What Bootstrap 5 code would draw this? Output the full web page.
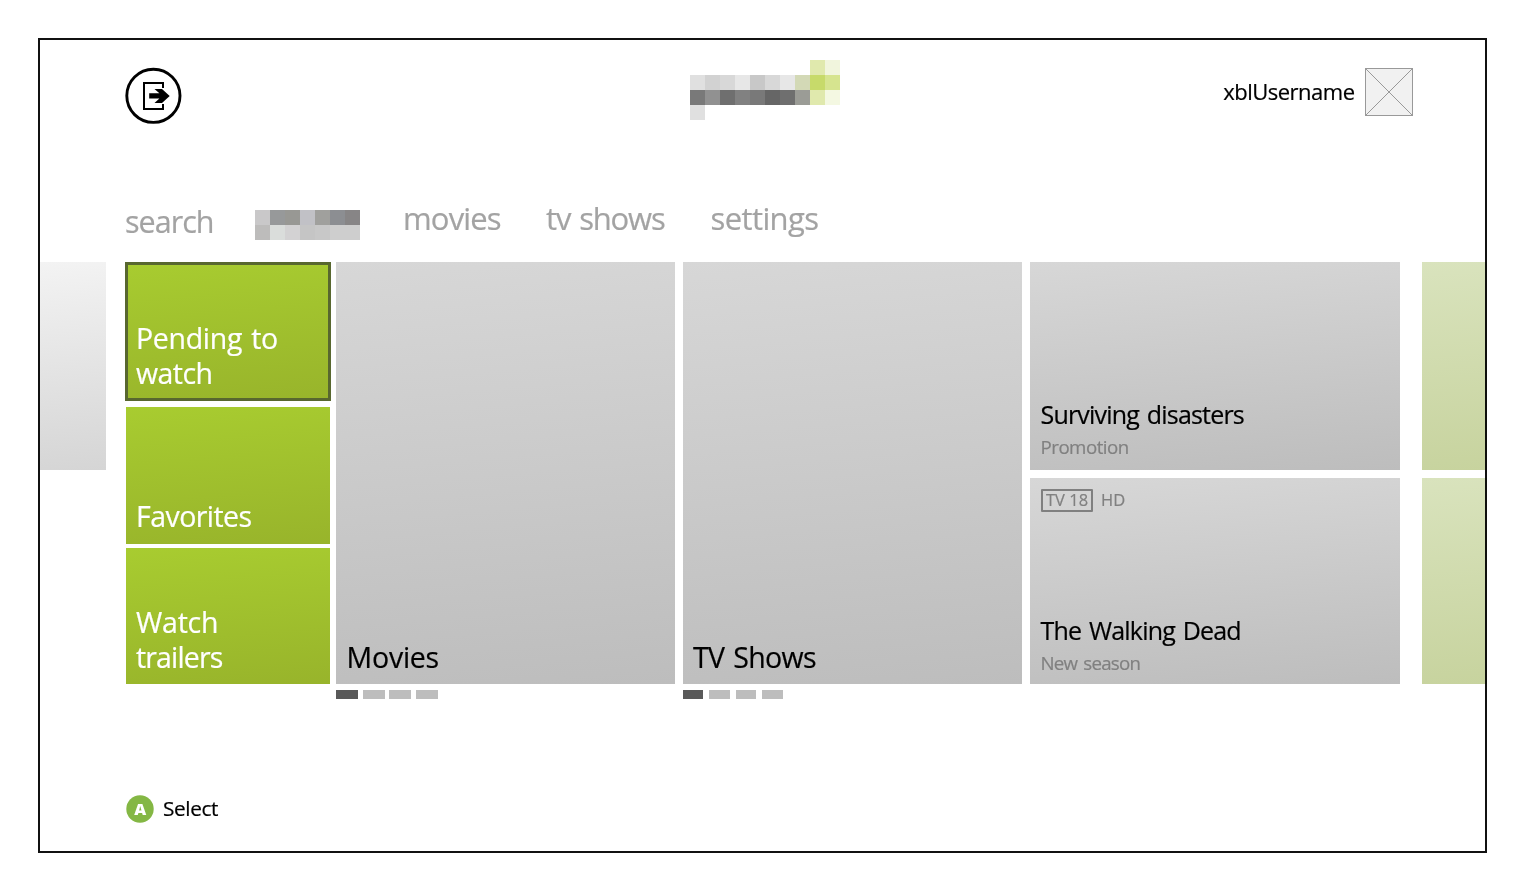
<!DOCTYPE html>
<html lang="en">
<head>
<meta charset="utf-8">
<meta name="viewport" content="width=device-width, initial-scale=1">
<title>Home</title>
<link rel="stylesheet" href="https://cdn.jsdelivr.net/npm/bootstrap@5.3.0/dist/css/bootstrap.min.css">
<style>
  body { font-family: "Open Sans", "Noto Sans", sans-serif; color: #000; background: #fff; -webkit-text-stroke: .2px; word-spacing: 2px; }
  a { color: inherit; text-decoration: none; }
  .screen { margin: 38px 0 0 38px; width: 1449px; height: 814.5px; border: 2px solid #111; }

  /* top bar */
  .topbar { height: 150px; padding: 20px 72px 0 85px; }
  .logo { width: 150px; height: 60px; margin-left: 508px; }
  .user { margin-top: 8px; gap: 10.5px; font-size: 22px; letter-spacing: -.5px; line-height: 48px; }
  .user span { margin-top: -1px; }
  svg { -webkit-text-stroke: 0; }

  /* section menu */
  .sections { height: 72px; padding-left: 85px; grid-template-columns: 130px 148px 143px 164.5px 150px; }
  .sections a { font-size: 31px; line-height: 40px; color: #a3a3a3; white-space: nowrap; }
  .sections a:first-child { margin-top: 3px; font-size: 30.5px; }
  .sections svg { margin-top: 12px; }

  /* tiles */
  .board { height: 422px; }
  .board > * { flex-shrink: 0; }
  .tile { display: flex; flex-direction: column; justify-content: flex-end; background: linear-gradient(175deg, #d7d7d7, #bdbdbd); }
  .tile.lime { background: linear-gradient(175deg, #a8cc30, #98b42b); color: #fff; padding: 0 10px 9.5px; height: 136.5px; width: 203.5px; margin-left: 1px; font-size: 28.5px; line-height: 35px; }
  .tile.lime.chosen { height: 139px; width: 206px; margin-left: 0; border: 3px solid #58672f; padding: 0 8px 7px; background-origin: border-box; }
  .tile.tall { width: 339px; height: 100%; padding: 0 10px 9.5px; font-size: 28.5px; line-height: 35px; }
  .tile.wide { width: 370px; height: 207.5px; padding: 11px 10.5px; }
  .tile.wide.short { height: 206px; padding-bottom: 9px; }
  .tile.wide h2 { font-size: 25px; line-height: 32px; margin: 0 0 4.7px; font-weight: 400; }
  .tile.wide p { font-size: 18.7px; line-height: 24px; margin: 0; color: #808080; }
  .tags { font-size: 16.5px; color: #808080; margin-bottom: auto; line-height: 18.5px; word-spacing: 0; }
  .rating { border: 2px solid #808080; width: 52.5px; height: 22.5px; border-radius: 1px; padding-left: 3.5px; }
  .peek { height: 207.5px; }
  .peek.before { width: 66px; background: linear-gradient(175deg, #f3f3f3, #d5d5d5); }
  .peek.after { width: 65px; background: linear-gradient(175deg, #d9e3bd, #c7d39e); }
  .peek.after + .peek.after { height: 206px; }
  .after-col { mix-blend-mode: multiply; }
  .pager { margin-top: 6.4px; }
  .pager i { height: 9px; background: #bdbdbd; }
  .pager i:first-child { background: #595959; }

  .hint { padding: 110px 0 0 86px; font-size: 20.8px; letter-spacing: -.38px; gap: 9px; }
  .hint span { margin-top: -1px; }
</style>
</head>
<body>
<main class="screen">
  <header class="topbar d-flex align-items-start">
    <a href="#" aria-label="Exit"><svg class="d-block" width="57" height="72" viewBox="125 60 57 72">
      <circle cx="153.4" cy="95.8" r="26.6" fill="none" stroke="#000" stroke-width="2.9"/>
      <path d="M163 88V83H144V109H163V104" fill="none" stroke="#000" stroke-width="2"/>
      <path d="M149.2 93.3H159.4L154.5 89H162L169.7 96L162 103H154.5L159.4 98.5H149.2Z"/>
    </svg></a>
    <svg class="logo" viewBox="0 0 10 4" shape-rendering="crispEdges">
      <path fill="#e0e9ad" d="M8 0h1v1H8zM8 2h1v1H8z"/><path fill="#f1f5dd" d="M9 0h1v1H9z"/>
      <path fill="#e0e0e0" d="M0 1h1v1H0zM0 3h1v1H0z"/><path fill="#d2d2d2" d="M1 1h1v1H1z"/><path fill="#d8d8d8" d="M2 1h1v1H2zM5 1h1v1H5z"/>
      <path fill="#e7e7e7" d="M3 1h1v1H3zM6 1h1v1H6z"/><path fill="#c8c8c8" d="M4 1h1v1H4z"/>
      <path fill="#d3d9b6" d="M7 1h1v1H7z"/><path fill="#c7da6a" d="M8 1h1v1H8z"/><path fill="#d6e48f" d="M9 1h1v1H9z"/>
      <path fill="#797979" d="M0 2h1v1H0zM4 2h1v1H4z"/><path fill="#919191" d="M1 2h1v1H1z"/><path fill="#6f6f6f" d="M2 2h1v1H2zM6 2h1v1H6z"/>
      <path fill="#818181" d="M3 2h1v1H3z"/><path fill="#666" d="M5 2h1v1H5z"/><path fill="#9b9c96" d="M7 2h1v1H7z"/><path fill="#f4f8e2" d="M9 2h1v1H9z"/>
    </svg>
    <div class="user d-flex ms-auto"><span>xblUsername</span>
      <svg width="48" height="48"><rect x=".5" y=".5" width="47" height="47" fill="#f1f1f1" stroke="#999"/><path d="M1 1L47 47M47 1L1 47" stroke="#999"/></svg>
    </div>
  </header>

  <nav class="sections d-grid align-items-start pt-2 mt-0">
    <a href="#" style="letter-spacing:-.98px">search</a>
    <svg width="105" height="30" viewBox="0 0 7 2" shape-rendering="crispEdges">
      <path fill="#c9c8c9" d="M0 0h1v1H0z"/><path fill="#97999a" d="M1 0h1v1H1z"/><path fill="#989894" d="M2 0h1v1H2z"/><path fill="#c1c1c6" d="M3 0h1v1H3z"/><path fill="#a0a09d" d="M4 0h1v1H4z"/><path fill="#8c8e92" d="M5 0h1v1H5z"/><path fill="#878586" d="M6 0h1v1H6z"/>
      <path fill="#bdbcbb" d="M0 1h1v1H0z"/><path fill="#dadddb" d="M1 1h1v1H1z"/><path fill="#d3d2d3" d="M2 1h1v1H2z"/><path fill="#c5c5c5" d="M3 1h1v1H3z"/><path fill="#c8c8c8" d="M4 1h1v1H4z"/><path fill="#cecece" d="M5 1h2v1H5z"/>
    </svg>
    <a href="#" style="letter-spacing:-.85px">movies</a>
    <a href="#" style="letter-spacing:-1.15px">tv shows</a>
    <a href="#" style="letter-spacing:-.6px">settings</a>
  </nav>

  <section class="board d-flex align-items-start">
    <div class="peek before"></div>
    <div style="margin-left:19px" class="d-flex flex-column h-100">
      <a href="#" class="tile lime chosen"><span style="letter-spacing:-.3px">Pending to</span><span style="letter-spacing:-.56px">watch</span></a>
      <a href="#" class="tile lime" style="margin-top:6px;letter-spacing:-.55px">Favorites</a>
      <a href="#" class="tile lime" style="margin-top:4px"><span style="letter-spacing:-.24px">Watch</span><span style="letter-spacing:-.85px">trailers</span></a>
    </div>
    <div style="margin-left:5px" class="h-100">
      <a href="#" class="tile tall" style="letter-spacing:-.24px;padding-left:10.6px">Movies</a>
      <div class="pager d-flex" style="gap:4.6px"><i style="width:22px"></i><i style="width:22px"></i><i style="width:22px"></i><i style="width:22px"></i></div>
    </div>
    <div class="h-100 ms-2">
      <a href="#" class="tile tall" style="letter-spacing:-.62px">TV Shows</a>
      <div class="pager d-flex" style="gap:6px"><i style="width:20.4px"></i><i style="width:20.4px"></i><i style="width:20.4px"></i><i style="width:20.4px"></i></div>
    </div>
    <div class="ms-2 d-flex flex-column justify-content-between h-100">
      <a href="#" class="tile wide"><h2 style="letter-spacing:-.8px">Surviving disasters</h2><p style="letter-spacing:-.5px">Promotion</p></a>
      <a href="#" class="tile wide short">
        <div class="tags d-flex gap-2"><span class="rating">TV 18</span><span style="padding-top:2px">HD</span></div>
        <h2 style="letter-spacing:-.8px">The Walking Dead</h2><p style="letter-spacing:-.77px">New season</p></a>
    </div>
    <div style="margin-left:22px" class="after-col d-flex flex-column justify-content-between h-100">
      <div class="peek after"></div>
      <div class="peek after"></div>
    </div>
  </section>

  <footer class="hint d-flex align-items-center">
    <svg width="28" height="28"><circle cx="14" cy="14" r="13.7" fill="#84b744"/><text x="14" y="20.3" text-anchor="middle" font-family="Open Sans" font-weight="800" font-size="16.5" fill="#fff">A</text></svg>
    <span>Select</span>
  </footer>
</main>
<script src="https://cdn.jsdelivr.net/npm/bootstrap@5.3.0/dist/js/bootstrap.bundle.min.js"></script>
</body>
</html>
